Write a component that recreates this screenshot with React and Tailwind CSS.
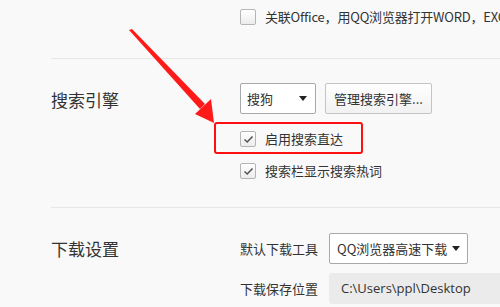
import React from 'react';

const font = { fontFamily: '"Noto Sans CJK SC", "Noto Sans", sans-serif' };

function CheckBox({ checked }) {
  return (
    <div className="flex h-[16px] w-[16px] shrink-0 items-center justify-center rounded-[2px] border border-[#b5b5b5] bg-gradient-to-b from-white to-[#ececec]">
      {checked && (
        <svg width="11" height="9" viewBox="0 0 11 9">
          <path d="M1.5 4.5 L4.2 7 L9.5 1.5" fill="none" stroke="#555" strokeWidth="1.6" />
        </svg>
      )}
    </div>
  );
}

function Caret() {
  return (
    <svg width="8" height="5" viewBox="0 0 8 5" className="shrink-0">
      <path d="M0 0 H8 L4 5 Z" fill="#222" />
    </svg>
  );
}

function Arrow() {
  return (
    <svg className="pointer-events-none absolute left-0 top-0" width="500" height="307" viewBox="0 0 500 307">
      <path d="M129 30 L132 29 L205 104 L200 109 Z" fill="#ff1a1a" />
      <path d="M214 123 L195 114 L211 99 Z" fill="#ff1a1a" />
    </svg>
  );
}

export default function App() {
  return (
    <div className="relative h-[307px] w-[500px] overflow-hidden bg-[#f9f9f9] text-[13px] text-[#333]" style={font}>
      <div className="flex h-[35px] items-start pl-[240px] pt-[9px]">
        <div className="flex items-center gap-[9px] whitespace-nowrap">
          <CheckBox />
          <span className="leading-[16px] tracking-[-0.2px]">关联Office，用QQ浏览器打开WORD，EXCEL</span>
        </div>
      </div>

      <div className="ml-[51px] mt-[23px] h-px bg-[#e6e6e6]" />

      <div className="flex pl-[51px] pt-[24px]">
        <div className="w-[189px] shrink-0 pt-[5px] text-[17px] leading-[24px]">搜索引擎</div>
        <div className="flex flex-col">
          <div className="flex gap-[9px]">
            <div className="flex h-[31px] w-[76px] items-center justify-between rounded-[2px] border border-[#a9a9a9] bg-white pl-[6px] pr-[8px]">
              <span>搜狗</span>
              <Caret />
            </div>
            <div className="flex h-[31px] w-[107px] items-center justify-center rounded-[2px] border border-[#c4c4c4] bg-gradient-to-b from-white to-[#f1f1f1]">
              管理搜索引擎...
            </div>
          </div>
          <div className="relative mt-[17px] flex items-center gap-[9px]">
            <div className="absolute -left-[26px] -top-[9px] h-[32px] w-[149px] rounded-[3px] border-[2.5px] border-[#ff1010]" />
            <CheckBox checked />
            <span className="leading-[16px]">启用搜索直达</span>
          </div>
          <div className="mt-[16px] flex items-center gap-[9px]">
            <CheckBox checked />
            <span className="leading-[16px]">搜索栏显示搜索热词</span>
          </div>
        </div>
      </div>

      <div className="ml-[51px] mt-[28px] h-px bg-[#e6e6e6]" />

      <div className="flex pl-[51px] pt-[25px]">
        <div className="w-[189px] shrink-0 pt-[4px] text-[17px] leading-[24px]">下载设置</div>
        <div className="flex flex-col gap-[9px]">
          <div className="flex items-center">
            <span className="w-[89px] shrink-0">默认下载工具</span>
            <div className="flex h-[31px] w-[139px] shrink-0 items-center justify-between rounded-[2px] border border-[#a9a9a9] bg-white pl-[7px] pr-[7px]">
              <span className="whitespace-nowrap">QQ浏览器高速下载</span>
              <Caret />
            </div>
          </div>
          <div className="flex items-center">
            <span className="w-[89px] shrink-0">下载保存位置</span>
            <div className="flex h-[31px] w-[200px] shrink-0 items-center rounded-l-[3px] bg-[#ebebeb] pl-[12px]">
              <span className="whitespace-nowrap" style={{ fontFamily: '"Open Sans", "Noto Sans", sans-serif' }}>C:\Users\ppl\Desktop</span>
            </div>
          </div>
        </div>
      </div>

      <Arrow />
    </div>
  );
}
